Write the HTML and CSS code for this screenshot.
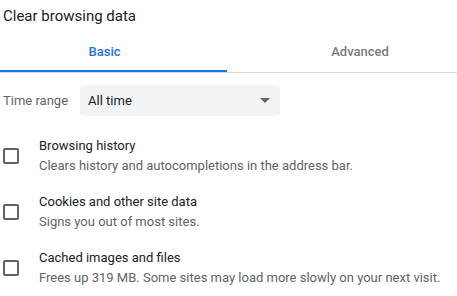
FILE: index.html
```html
<!doctype html>
<html lang="en">

<head>
    <meta charset="UTF-8" />
    <meta name="viewport" content="width=device-width, initial-scale=1.0" />
    <title>Clear browsing data</title>
    <link rel="stylesheet" href="styles.css">
</head>

<body>
    <div class="dialog">
        <div class="dialog-title">Clear browsing data</div>

        <!-- tabs -->
        <div class="tabs">
            <div class="tab tab-basic active">Basic</div>
            <div class="tab tab-advanced">Advanced</div>
        </div>

        <div class="time-range">
            <span class="time-label">Time range</span>
            <div class="select">
                <span>All time</span>
                <span class="arrow"></span>
            </div>
        </div>

        <!-- opciones -->
        <ul class="options">
            <li>
                <span class="checkbox"></span>
                <div class="option-text">
                    <div class="option-label">Browsing history</div>
                    <div class="option-sub">Clears history and autocompletions in the address bar.</div>
                </div>
            </li>
            <li>
                <span class="checkbox"></span>
                <div class="option-text">
                    <div class="option-label">Cookies and other site data</div>
                    <div class="option-sub">Signs you out of most sites.</div>
                </div>
            </li>
            <li>
                <span class="checkbox"></span>
                <div class="option-text">
                    <div class="option-label">Cached images and files</div>
                    <div class="option-sub">Frees up 319 MB. Some sites may load more slowly on your next visit.</div>
                </div>
            </li>
        </ul>
    </div>
</body>

</html>
```

FILE: styles.css
```css
*,
*::before,
*::after {
    box-sizing: border-box;
}

body {
    margin: 0;
    font-family: Roboto, 'Liberation Sans', sans-serif;
    background: #fff;
    color: #202124;
}

.dialog {
    width: 457px;
}

.dialog-title {
    font-size: 15px;
    line-height: 20px;
    padding: 6px 0 0 3px;
}

.tabs {
    display: flex;
    border-bottom: 1px solid #dadce0;
}

.tab {
    flex: none;
    width: 50%;
    text-align: center;
    font-size: 13px;
    font-weight: 500;
    line-height: 20px;
    padding: 16px 0 8px;
    color: #777b80;
    border-bottom: 2px solid transparent;
}

.tab-basic {
    width: 227px;
    padding-right: 18px;
}

.tab-advanced {
    width: 230px;
    padding-left: 36px;
}

.tab.active {
    color: #1a73e8;
    border-bottom-color: #1a73e8;
}

.time-range {
    display: flex;
    align-items: center;
    gap: 12px;
    margin-top: 12px;
    padding-left: 3px;
    font-size: 13px;
    line-height: 20px;
}

.time-label {
    color: #5f6368;
}

.select {
    width: 200px;
    height: 31px;
    background: #f1f3f4;
    border-radius: 4px;
    display: flex;
    align-items: center;
    justify-content: space-between;
    padding: 0 10px 0 8px;
    color: #202124;
}

.arrow {
    width: 0;
    height: 0;
    border-left: 5px solid transparent;
    border-right: 5px solid transparent;
    border-top: 5px solid #5f6368;
}

.options {
    list-style: none;
    margin: 12px 0 0;
    padding: 0 0 0 3px;
}

.options>li {
    display: flex;
    align-items: center;
    gap: 20px;
    padding: 8px 0;
}

.checkbox {
    width: 16px;
    height: 16px;
    border: 2px solid #5f6368;
    border-radius: 2px;
    flex-shrink: 0;
}

.option-text {
    font-size: 13px;
    line-height: 20px;
}

.option-label {
    color: #202124;
}

.option-sub {
    color: #5f6368;
}
```
